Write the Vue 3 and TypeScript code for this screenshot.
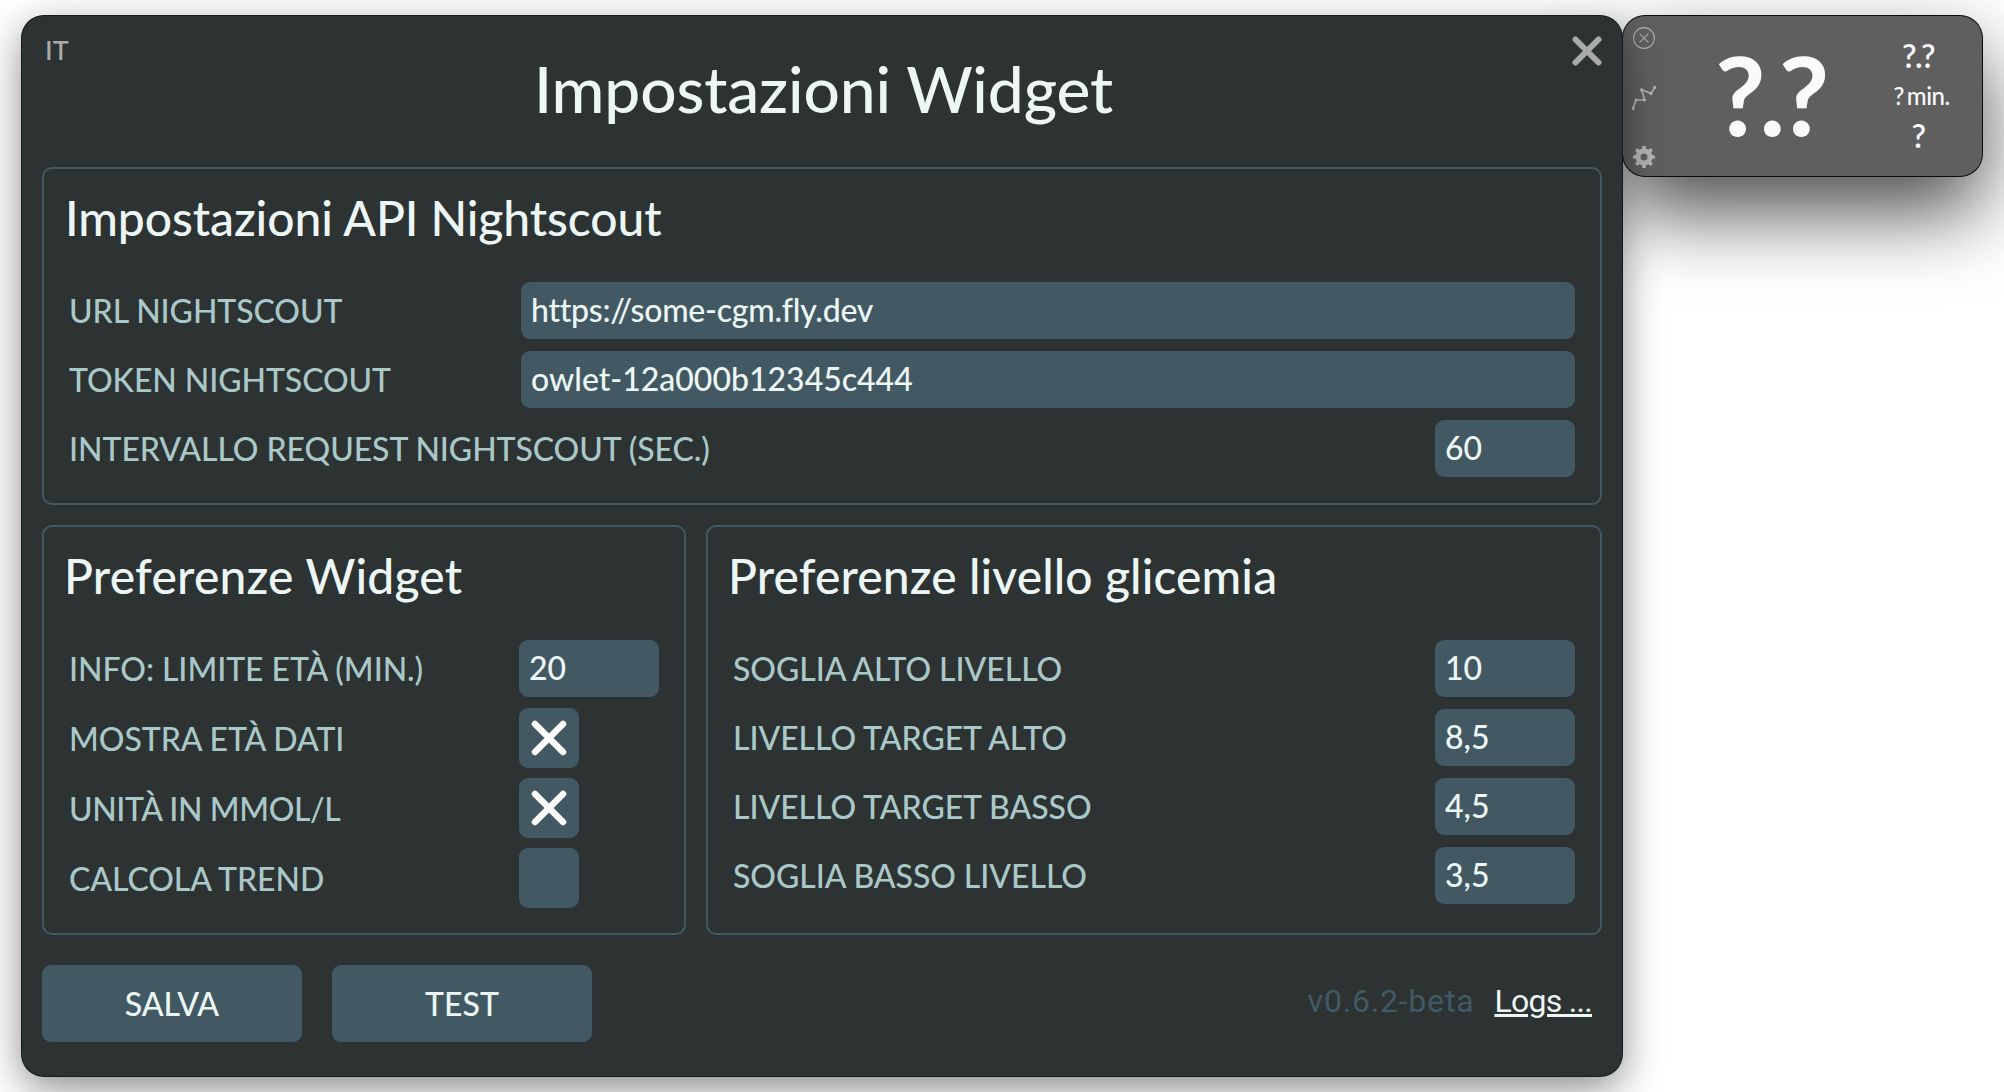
<script setup lang="ts">
interface Field { label: string; value: string }
interface Toggle { label: string; checked: boolean; tight?: boolean }

const api: Field[] = [
  { label: 'URL NIGHTSCOUT', value: 'https://some-cgm.fly.dev' },
  { label: 'TOKEN NIGHTSCOUT', value: 'owlet-12a000b12345c444' },
]
const toggles: Toggle[] = [
  { label: 'MOSTRA ETÀ DATI', checked: true },
  { label: 'UNITÀ IN MMOL/L', checked: true, tight: true },
  { label: 'CALCOLA TREND', checked: false },
]
const levels: Field[] = [
  { label: 'SOGLIA ALTO LIVELLO', value: '10' },
  { label: 'LIVELLO TARGET ALTO', value: '8,5' },
  { label: 'LIVELLO TARGET BASSO', value: '4,5' },
  { label: 'SOGLIA BASSO LIVELLO', value: '3,5' },
]
const teeth = [0, 45, 90, 135, 180, 225, 270, 315]
const trend = [[1, 22.4], [4, 14], [12.6, 14], [9.6, 3.8], [19, 7.4], [22.8, 1.4]]
</script>

<template>
  <div class="desktop">
    <main class="window">
      <header class="top">
        <span class="lang">IT</span>
        <h1>Impostazioni Widget</h1>
        <svg class="close" viewBox="0 0 30 30"><path d="M3.5 3.5 26.5 26.5M26.5 3.5 3.5 26.5" /></svg>
      </header>

      <section class="panel api">
        <h2>Impostazioni API Nightscout</h2>
        <div v-for="(f, i) in api" :key="f.label" class="row">
          <label>{{ f.label }}</label>
          <div class="input wide" :class="{ url: i === 0 }">{{ f.value }}</div>
        </div>
        <div class="row">
          <label>INTERVALLO REQUEST NIGHTSCOUT (SEC.)</label>
          <div class="input">60</div>
        </div>
      </section>

      <div class="columns">
        <section class="panel prefs">
          <h2>Preferenze Widget</h2>
          <div class="row">
            <label>INFO: LIMITE ETÀ (MIN.)</label>
            <div class="input">20</div>
          </div>
          <div v-for="t in toggles" :key="t.label" class="row check-row">
            <label :class="{ tight: t.tight }">{{ t.label }}</label>
            <div class="check">
              <svg v-if="t.checked" viewBox="0 0 36 36"><path d="M4 4 32 32M32 4 4 32" /></svg>
            </div>
          </div>
        </section>

        <section class="panel glucose">
          <h2>Preferenze livello glicemia</h2>
          <div v-for="l in levels" :key="l.label" class="row">
            <label>{{ l.label }}</label>
            <div class="input">{{ l.value }}</div>
          </div>
        </section>
      </div>

      <footer>
        <button>SALVA</button>
        <button>TEST</button>
        <span class="version">v0.6.2-beta</span>
        <a class="logs">Logs ...</a>
      </footer>
    </main>

    <aside class="widget">
      <nav>
        <svg viewBox="0 0 24 24">
          <circle cx="12" cy="12" r="10.4" class="thin" />
          <path d="M7.6 7.6 16.4 16.4M16.4 7.6 7.6 16.4" class="thin" />
        </svg>
        <svg viewBox="0 0 24 24">
          <polyline :points="trend.join(' ')" class="trend" />
          <circle v-for="p in trend" :key="p[0]" :cx="p[0]" :cy="p[1]" r="1.6" class="solid" />
        </svg>
        <svg viewBox="0 0 24 24">
          <circle cx="12" cy="12" r="6" class="ring" />
          <path v-for="a in teeth" :key="a" d="M9.9 4.6 10.4 1H13.6L14.1 4.6Z" class="solid" :transform="`rotate(${a} 12 12)`" />
        </svg>
      </nav>
      <div class="reading">?.?</div>
      <div class="stats">
        <span class="delta">?.?</span>
        <span class="age">? min.</span>
        <span class="delta">?</span>
      </div>
    </aside>
  </div>
</template>

<style>
body { margin: 0; background: #fff; }
</style>

<style scoped>
.desktop {
  box-sizing: border-box;
  display: flex;
  align-items: flex-start;
  width: 2004px;
  height: 1092px;
  padding: 16px 0 0 22px;
  overflow: hidden;
  background: #fff;
  color: #ecf6f4;
  font-family: Lato, "Open Sans", sans-serif;
  font-weight: 500;
}
.window {
  position: relative;
  z-index: 1;
  box-sizing: border-box;
  flex: none;
  width: 1600px;
  height: 1060px;
  padding: 0 20px;
  border-radius: 22px;
  background: #2d3233;
  box-shadow: 0 0 0 1px #151a1a, 0 12px 40px rgba(0, 0, 0, .47);
}
.top { display: flex; justify-content: space-between; height: 151px; }
.lang { width: 60px; padding: 18px 0 0 3px; font-size: 27px; line-height: 32px; color: #a9abab; }
h1 { margin: 34px 3px 0 0; font-size: 64px; line-height: 78px; font-weight: 500; letter-spacing: -.12px; }
.close { width: 30px; height: 30px; margin: 20px 0 0 27px; }
.close path { fill: none; stroke: #a9abab; stroke-width: 6; stroke-linecap: round; }
.panel {
  box-sizing: border-box;
  padding: 20px 25px 0 21px;
  border: 2px solid #425963;
  border-radius: 10px;
}
.api { height: 338px; }
.columns { display: flex; gap: 20px; margin-top: 20px; }
.prefs { width: 644px; height: 410px; }
.glucose { width: 896px; height: 410px; }
h2 { margin: 0 0 35px; font-size: 48px; line-height: 58px; font-weight: 500; letter-spacing: -.08px; white-space: nowrap; }
.prefs h2 { margin-left: -1px; letter-spacing: .2px; }
.glucose h2 { margin-left: -1px; letter-spacing: .1px; }
.row {
  display: flex;
  align-items: center;
  justify-content: space-between;
  height: 57px;
  margin-bottom: 12px;
  padding-left: 4px;
}
label { font-size: 32px; line-height: 57px; color: #aac8c8; letter-spacing: -.06px; white-space: nowrap; }
.tight { letter-spacing: -.4px; }
.input {
  box-sizing: border-box;
  width: 140px;
  height: 57px;
  padding-left: 10px;
  border-radius: 9px;
  background: #425963;
  font-size: 32px;
  line-height: 56px;
}
.wide { width: 1054px; }
.url { letter-spacing: -.25px; }
.check-row { height: 60px; margin: -1px 0 10px; }
.check-row + .check-row { margin-top: 0; }
.check {
  display: flex;
  align-items: center;
  justify-content: center;
  width: 60px;
  height: 60px;
  margin-right: 80px;
  border-radius: 9px;
  background: #425963;
}
.check svg { width: 36px; height: 36px; }
.check path { fill: none; stroke: #fff; stroke-width: 6.5; stroke-linecap: round; }
footer { display: flex; align-items: flex-start; margin-top: 30px; }
button {
  width: 260px;
  height: 77px;
  margin-right: 30px;
  padding: 0;
  border: 0;
  border-radius: 9px;
  background: #425963;
  color: inherit;
  font: 500 32px/75px Lato, sans-serif;
}
.version, .logs { font-family: Roboto, sans-serif; font-size: 32px; line-height: 72px; font-weight: 400; }
.version { margin-left: auto; color: #425963; letter-spacing: .8px; }
.logs { margin: 0 10px 0 20px; letter-spacing: -.7px; text-decoration: underline; text-decoration-thickness: 3px; text-underline-offset: 2px; }
.widget {
  box-sizing: border-box;
  display: flex;
  flex: none;
  width: 359px;
  height: 160px;
  margin-left: 1px;
  border-radius: 22px;
  background: #5f5f5f;
  color: #fafafa;
  box-shadow: 0 0 0 1px #0c0c0c, 0 36px 80px rgba(0, 0, 0, .7);
}
nav { display: flex; flex-direction: column; justify-content: space-between; width: 42px; padding: 10px 0 7px 9px; box-sizing: border-box; }
nav svg { width: 24px; height: 24px; }
.thin { fill: none; stroke: #b0b0b0; stroke-width: 1.1; }
.trend { fill: none; stroke: #b0b0b0; stroke-width: 1.7; }
.ring { fill: none; stroke: #b4b4b4; stroke-width: 5; }
.solid { fill: #b4b4b4; }
.reading {
  width: 214px;
  text-align: center;
  text-indent: -6px;
  font-size: 110px;
  line-height: 154px;
  font-weight: 700;
  letter-spacing: -6.5px;
}
.stats { display: flex; flex-direction: column; width: 80px; align-items: center; padding-top: 20px; font-weight: 600; }
.delta { padding-right: 2px; font-size: 32px; line-height: 40px; letter-spacing: -1.5px; }
.age { padding-left: 5px; font-size: 24px; line-height: 40px; font-weight: 500; letter-spacing: -.5px; word-spacing: -2.5px; }
</style>
